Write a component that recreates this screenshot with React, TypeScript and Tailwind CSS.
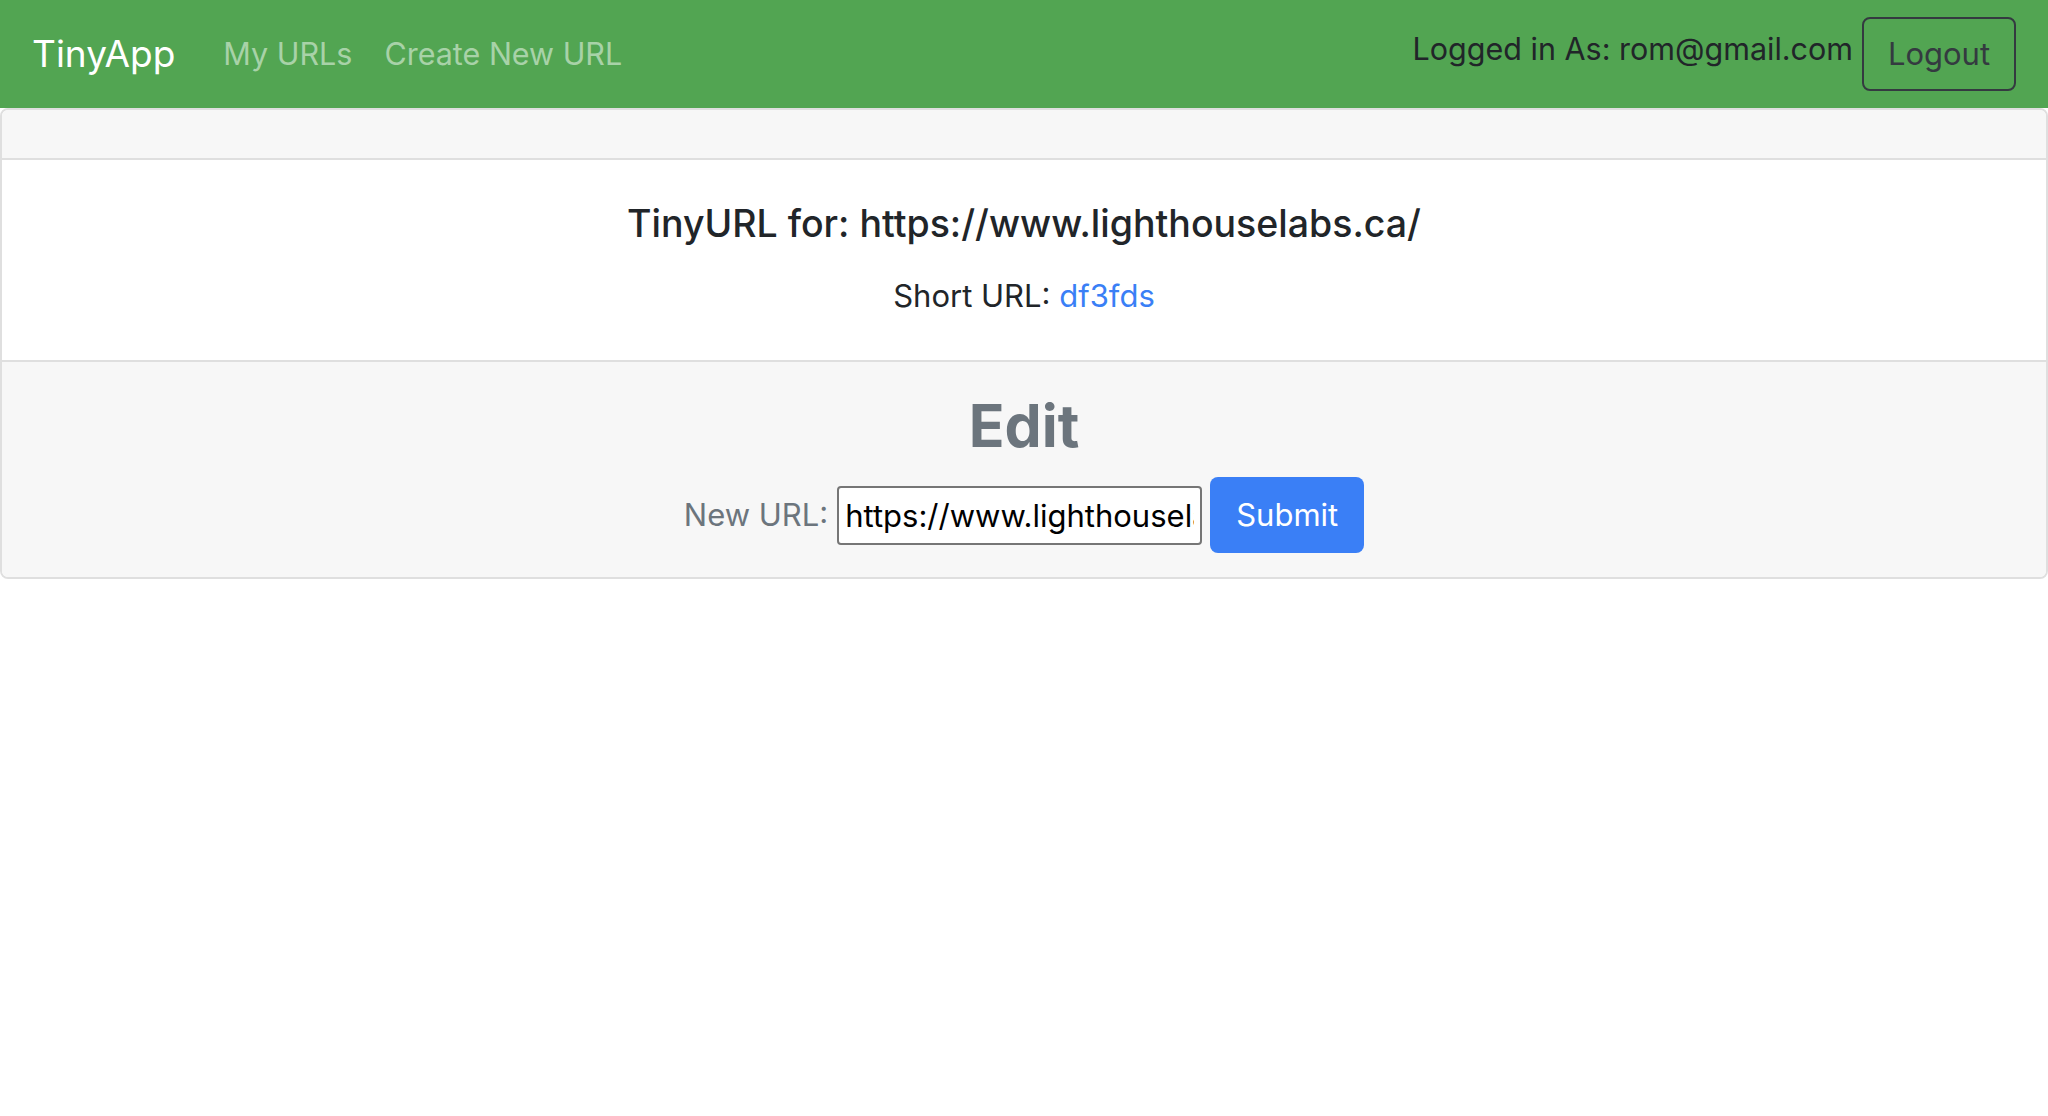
import React from "react";

export default function App() {
  return (
    <div className="min-h-screen bg-white" style={{ fontFamily: "Inter, 'Noto Sans', 'Liberation Sans', sans-serif" }}>
      <nav className="flex h-[108px] items-center justify-between bg-[#52a552] px-[32px]">
        <div className="flex items-center">
          <a className="mr-[32px] text-[37px] leading-[60px] text-white" href="#">TinyApp</a>
          <a className="px-[16px] text-[30.5px] leading-[48px] text-[#a8d2a8]" href="#">My URLs</a>
          <a className="px-[16px] text-[30.5px] leading-[48px] text-[#a8d2a8]" href="#">Create New URL</a>
        </div>
        <div className="flex items-center gap-[9px]">
          <span className="mb-[10px] text-[30.5px] leading-[48px] text-[#212529]">Logged in As: rom@gmail.com</span>
          <button className="h-[74px] w-[154px] rounded-[8px] border-2 border-[#343a40] text-[31px] leading-[48px] text-[#343a40]">Logout</button>
        </div>
      </nav>
      <div className="rounded-[8px] border-2 border-[#dfdfdf]">
        <div className="h-[50px] rounded-t-[6px] border-b-2 border-[#dfdfdf] bg-[#f7f7f7]"></div>
        <div className="px-[40px] py-[40px] text-center">
          <h5 className="mb-[24px] text-[37.5px] font-medium leading-[48px] text-[#212529]">TinyURL for: https://www.lighthouselabs.ca/</h5>
          <p className="text-[31px] leading-[48px] text-[#212529]">
            Short URL: <a className="text-[#3a7ff6]" href="#">df3fds</a>
          </p>
        </div>
        <div className="rounded-b-[6px] border-t-2 border-[#dfdfdf] bg-[#f7f7f7] px-[40px] pt-[25px] pb-[24px] text-center text-[#6c757d]">
          <h2 className="mb-[13px] text-[59px] font-bold leading-[77px]">Edit</h2>
          <form className="flex items-center justify-center" onSubmit={(e) => e.preventDefault()}>
            <label className="mr-[9px] text-[31px] leading-[48px] text-[#6c757d]">New URL:</label>
            <input
              className="h-[59px] w-[365px] rounded-[4px] border-2 border-[#767676] bg-white px-[6px] text-[31px] text-black outline-none"
              defaultValue="https://www.lighthouselabs.ca/"
              type="text"
            />
            <button className="ml-[8px] h-[76px] w-[154px] rounded-[8px] bg-[#3a7ff6] text-[31px] leading-[48px] text-white" type="submit">Submit</button>
          </form>
        </div>
      </div>
    </div>
  );
}
